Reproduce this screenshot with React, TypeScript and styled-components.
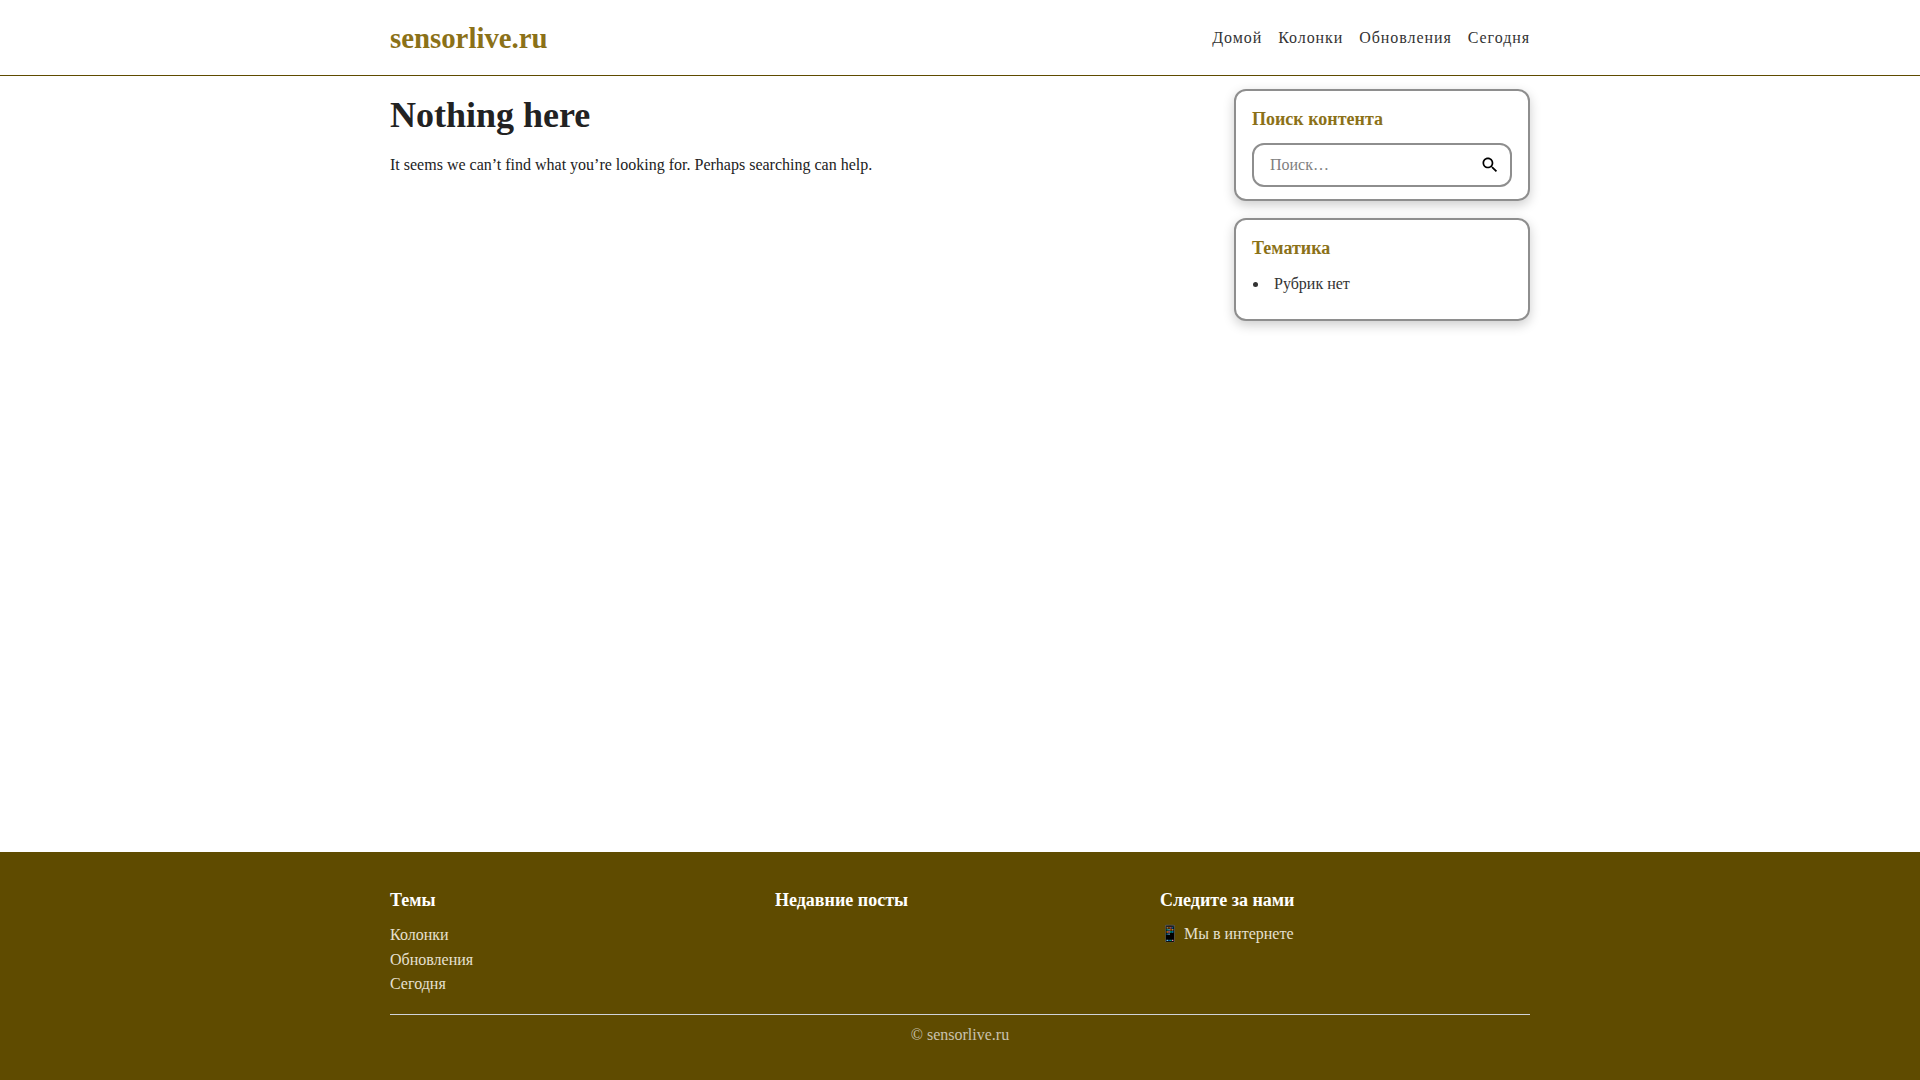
import React from "react";
import styled, { createGlobalStyle } from "styled-components";

const Global = createGlobalStyle`
  html, body { margin: 0; padding: 0; background: #fff; }
  body { font-family: "Liberation Serif", "Times New Roman", serif; font-size: 16px; line-height: 1.5; color: #222; }
  * { box-sizing: border-box; }
`;

const Page = styled.div`
  display: flex;
  flex-direction: column;
  min-height: 1080px;
`;
const Header = styled.header`
  height: 76px;
  border-bottom: 1px solid #5f4b00;
  flex: none;
`;
const Container = styled.div`
  width: 1140px;
  margin: 0 auto;
`;
const HeaderRow = styled(Container)`
  display: flex;
  align-items: center;
  justify-content: space-between;
  height: 75px;
`;
const Brand = styled.a`
  font-size: 28.8px;
  font-weight: 700;
  line-height: 36px;
  color: #8b7118;
  text-decoration: none;
`;
const Nav = styled.nav`
  display: flex;
  gap: 16px;
`;
const NavLink = styled.a`
  font-size: 16px;
  letter-spacing: 0.93px;
  color: #333;
  text-decoration: none;
`;
const Main = styled(Container)`
  flex: 1;
  display: flex;
  justify-content: space-between;
  align-items: flex-start;
`;
const Content = styled.main`
  width: 800px;
  padding-top: 18px;
`;
const Title = styled.h1`
  margin: 0 0 16px;
  font-size: 36px;
  line-height: 43px;
  font-weight: 700;
  color: #222;
`;
const Paragraph = styled.p`
  margin: 0;
  font-size: 16px;
  line-height: 24px;
`;
const Sidebar = styled.aside`
  width: 296px;
  padding-top: 13px;
  display: flex;
  flex-direction: column;
  gap: 17px;
`;
const Widget = styled.section`
  border: 2px solid #8e8e8e;
  border-radius: 12px;
  padding: 16px 16px 12px;
  background: #fff;
  box-shadow: 0 4px 12px rgba(0, 0, 0, 0.2);
`;
const WidgetTitle = styled.h2`
  margin: 0 0 12px;
  font-size: 18px;
  line-height: 24px;
  font-weight: 700;
  color: #8b7118;
`;
const SearchForm = styled.form`
  display: flex;
  align-items: center;
  height: 44px;
  padding: 0 10px 0 16px;
  border: 2px solid #8e8e8e;
  border-radius: 12px;
`;
const SearchInput = styled.input`
  flex: 1;
  min-width: 0;
  border: 0;
  outline: 0;
  padding: 0;
  background: transparent;
  font-family: inherit;
  font-size: 16px;
  color: #222;
  &::placeholder { color: #808080; opacity: 1; }
`;
const SearchButton = styled.button`
  display: flex;
  border: 0;
  padding: 0;
  background: none;
  color: #000;
`;
const List = styled.ul`
  margin: 0;
  padding: 0 0 0 17px;
  font-size: 16px;
  line-height: 24px;
  color: #333;
`;
const Item = styled.li`
  margin: 7px 0 11px;
  padding-left: 5px;
`;
const Footer = styled.footer`
  flex: none;
  height: 228px;
  background: #5f4b00;
  padding-top: 36px;
`;
const Columns = styled.div`
  display: grid;
  grid-template-columns: repeat(3, 370px);
  column-gap: 15px;
  height: 127px;
  border-bottom: 1px solid #d0d3d8;
`;
const ColTitle = styled.h3`
  margin: 0 0 11px;
  font-size: 18px;
  line-height: 24px;
  font-weight: 700;
  color: #fff;
`;
const FootList = styled.div<{ $nudge?: boolean }>`
  display: flex;
  flex-direction: column;
  margin-top: ${(p) => (p.$nudge ? "-1px" : "0")};
`;
const FootLink = styled.a`
  font-size: 16px;
  line-height: 24.6px;
  color: #e6e0d0;
  text-decoration: none;
`;
const Copy = styled.div`
  text-align: center;
  padding-top: 8px;
  font-size: 16px;
  line-height: 24px;
  color: #c9c2ae;
`;

export default function App() {
  return (
    <Page>
      <Global />
      <Header>
        <HeaderRow>
          <Brand href="#">sensorlive.ru</Brand>
          <Nav>
            <NavLink href="#">Домой</NavLink>
            <NavLink href="#">Колонки</NavLink>
            <NavLink href="#">Обновления</NavLink>
            <NavLink href="#">Сегодня</NavLink>
          </Nav>
        </HeaderRow>
      </Header>
      <Main>
        <Content>
          <Title>Nothing here</Title>
          <Paragraph>It seems we can’t find what you’re looking for. Perhaps searching can help.</Paragraph>
        </Content>
        <Sidebar>
          <Widget>
            <WidgetTitle>Поиск контента</WidgetTitle>
            <SearchForm>
              <SearchInput placeholder="Поиск…" />
              <SearchButton type="button" aria-label="Поиск">
                <svg width="20" height="20" viewBox="0 0 24 24" fill="currentColor">
                  <path d="M15.5 14h-.79l-.28-.27C15.41 12.59 16 11.11 16 9.5 16 5.91 13.09 3 9.5 3S3 5.91 3 9.5 5.91 16 9.5 16c1.61 0 3.09-.59 4.23-1.57l.27.28v.79l5 4.99L20.49 19l-4.99-5zm-6 0C7.01 14 5 11.99 5 9.5S7.01 5 9.5 5 14 7.01 14 9.5 11.99 14 9.5 14z" />
                </svg>
              </SearchButton>
            </SearchForm>
          </Widget>
          <Widget>
            <WidgetTitle>Тематика</WidgetTitle>
            <List>
              <Item>Рубрик нет</Item>
            </List>
          </Widget>
        </Sidebar>
      </Main>
      <Footer>
        <Container>
          <Columns>
            <div>
              <ColTitle>Темы</ColTitle>
              <FootList>
                <FootLink href="#">Колонки</FootLink>
                <FootLink href="#">Обновления</FootLink>
                <FootLink href="#">Сегодня</FootLink>
              </FootList>
            </div>
            <div>
              <ColTitle>Недавние посты</ColTitle>
            </div>
            <div>
              <ColTitle>Следите за нами</ColTitle>
              <FootList $nudge>
                <FootLink href="#">📱 Мы в интернете</FootLink>
              </FootList>
            </div>
          </Columns>
          <Copy>© sensorlive.ru</Copy>
        </Container>
      </Footer>
    </Page>
  );
}
